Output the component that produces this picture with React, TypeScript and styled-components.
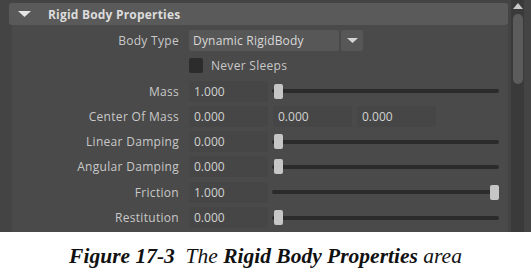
import React from "react";
import styled, { createGlobalStyle } from "styled-components";

const Global = createGlobalStyle`
  html, body { margin: 0; padding: 0; background: #ffffff; }
  body { width: 531px; height: 277px; overflow: hidden; }
`;

const Page = styled.div`
  width: 531px;
  height: 277px;
  display: flex;
  flex-direction: column;
  background: #ffffff;
`;

const Frame = styled.div`
  height: 232px;
  background: #444444;
  display: flex;
  padding: 0 7px 0 9px;
  gap: 3px;
  box-sizing: border-box;
`;

const Main = styled.div`
  width: 499px;
  display: flex;
  flex-direction: column;
  padding-top: 3px;
`;

const Header = styled.div`
  height: 22px;
  background: #5a5a5a;
  border-radius: 3px;
  display: flex;
  align-items: center;
  gap: 17px;
  padding-left: 9px;
  font-family: "Open Sans", "Noto Sans", sans-serif;
  font-weight: 700;
  font-size: 12px;
  letter-spacing: 0.2px;
  color: #dcdcdc;
`;

const Body = styled.div`
  flex: 1;
  margin-left: 3px;
  background: #4a4a4a;
  padding-top: 5px;
  display: flex;
  flex-direction: column;
  gap: 4.3px;
  font-family: "Open Sans", "Noto Sans", sans-serif;
  font-size: 12px;
`;

const Row = styled.div`
  display: grid;
  grid-template-columns: 167px 1fr;
  column-gap: 10px;
  align-items: center;
  height: 21px;
`;

const Label = styled.div`
  text-align: right;
  color: #c8c8c8;
  white-space: nowrap;
  letter-spacing: 0.3px;
`;

const Controls = styled.div`
  display: flex;
  align-items: center;
  gap: 4px;
  height: 21px;
`;

const Field = styled.div<{ $gap?: number }>`
  width: 79px;
  height: 21px;
  box-sizing: border-box;
  padding-left: 5px;
  line-height: 21px;
  background: #464646;
  border-radius: 2px;
  color: #d2d2d2;
  margin-right: ${(p) => p.$gap ?? 0}px;
`;

const Dropdown = styled.div`
  width: 150px;
  height: 21px;
  box-sizing: border-box;
  padding-left: 4px;
  line-height: 21px;
  background: #575757;
  border-radius: 2px;
  color: #d8d8d8;
  letter-spacing: 0.2px;
`;

const DropButton = styled.div`
  width: 22px;
  height: 21px;
  background: #575757;
  border-radius: 2px;
  display: flex;
  align-items: center;
  justify-content: center;
  margin-left: -2px;
`;

const Check = styled.div`
  width: 14px;
  height: 15px;
  background: #2c2c2c;
  border-radius: 2px;
  margin-right: 4px;
`;

const CheckText = styled.span`
  color: #c8c8c8;
  letter-spacing: 0.3px;
`;

const SliderBox = styled.div`
  position: relative;
  width: 227px;
  height: 21px;
  display: flex;
  align-items: center;
`;

const Track = styled.div`
  width: 100%;
  height: 4px;
  background: #2b2b2b;
  border-radius: 2px;
`;

const Handle = styled.div`
  position: absolute;
  top: 3px;
  width: 9px;
  height: 15px;
  background: #c6c6c6;
  border-radius: 2px;
`;

const Scrollbar = styled.div`
  width: 13px;
  background: #3a3a3a;
  display: flex;
  flex-direction: column;
  align-items: center;
  padding-top: 3px;
`;

const Thumb = styled.div`
  margin-top: 5px;
  width: 10px;
  height: 70px;
  background: #5c5c5c;
  border-radius: 5px;
`;

const Caption = styled.div`
  flex: 1;
  display: flex;
  justify-content: center;
  padding-top: 12px;
  font-family: "Liberation Serif", "Times New Roman", serif;
  font-style: italic;
  font-size: 21.5px;
  color: #111111;
  white-space: pre;
`;

const Strong = styled.b`
  font-weight: 700;
`;

const Slider = ({ value }: { value: number }) => (
  <SliderBox>
    <Track />
    <Handle style={{ left: 2 + value * 216 }} />
  </SliderBox>
);

const Down = ({ w, h, color }: { w: number; h: number; color: string }) => (
  <svg width={w} height={h} viewBox={`0 0 ${w} ${h}`}>
    <polygon points={`0,0 ${w},0 ${w / 2},${h}`} fill={color} />
  </svg>
);

const sliderRows: [string, string, number][] = [
  ["Linear Damping", "0.000", 0],
  ["Angular Damping", "0.000", 0],
  ["Friction", "1.000", 1],
  ["Restitution", "0.000", 0],
];

export default function App() {
  return (
    <Page>
      <Global />
      <Frame>
        <Main>
          <Header>
            <Down w={13} h={6} color="#e6e6e6" />
            <span>Rigid Body Properties</span>
          </Header>
          <Body>
            <Row>
              <Label>Body Type</Label>
              <Controls>
                <Dropdown>Dynamic RigidBody</Dropdown>
                <DropButton>
                  <Down w={11} h={5} color="#d6d6d6" />
                </DropButton>
              </Controls>
            </Row>
            <Row>
              <span />
              <Controls>
                <Check />
                <CheckText>Never Sleeps</CheckText>
              </Controls>
            </Row>
            <Row>
              <Label>Mass</Label>
              <Controls>
                <Field>1.000</Field>
                <Slider value={0} />
              </Controls>
            </Row>
            <Row>
              <Label>Center Of Mass</Label>
              <Controls>
                <Field $gap={1}>0.000</Field>
                <Field $gap={1}>0.000</Field>
                <Field>0.000</Field>
              </Controls>
            </Row>
            {sliderRows.map(([label, val, v]) => (
              <Row key={label}>
                <Label>{label}</Label>
                <Controls>
                  <Field>{val}</Field>
                  <Slider value={v} />
                </Controls>
              </Row>
            ))}
          </Body>
        </Main>
        <Scrollbar>
          <svg width={10} height={6} viewBox="0 0 10 6">
            <polygon points="5,0 10,6 0,6" fill="#c8c8c8" />
          </svg>
          <Thumb />
        </Scrollbar>
      </Frame>
      <Caption>
        <Strong>Figure 17-3</Strong>
        {"  The "}
        <Strong>Rigid Body Properties</Strong>
        {" area"}
      </Caption>
    </Page>
  );
}
